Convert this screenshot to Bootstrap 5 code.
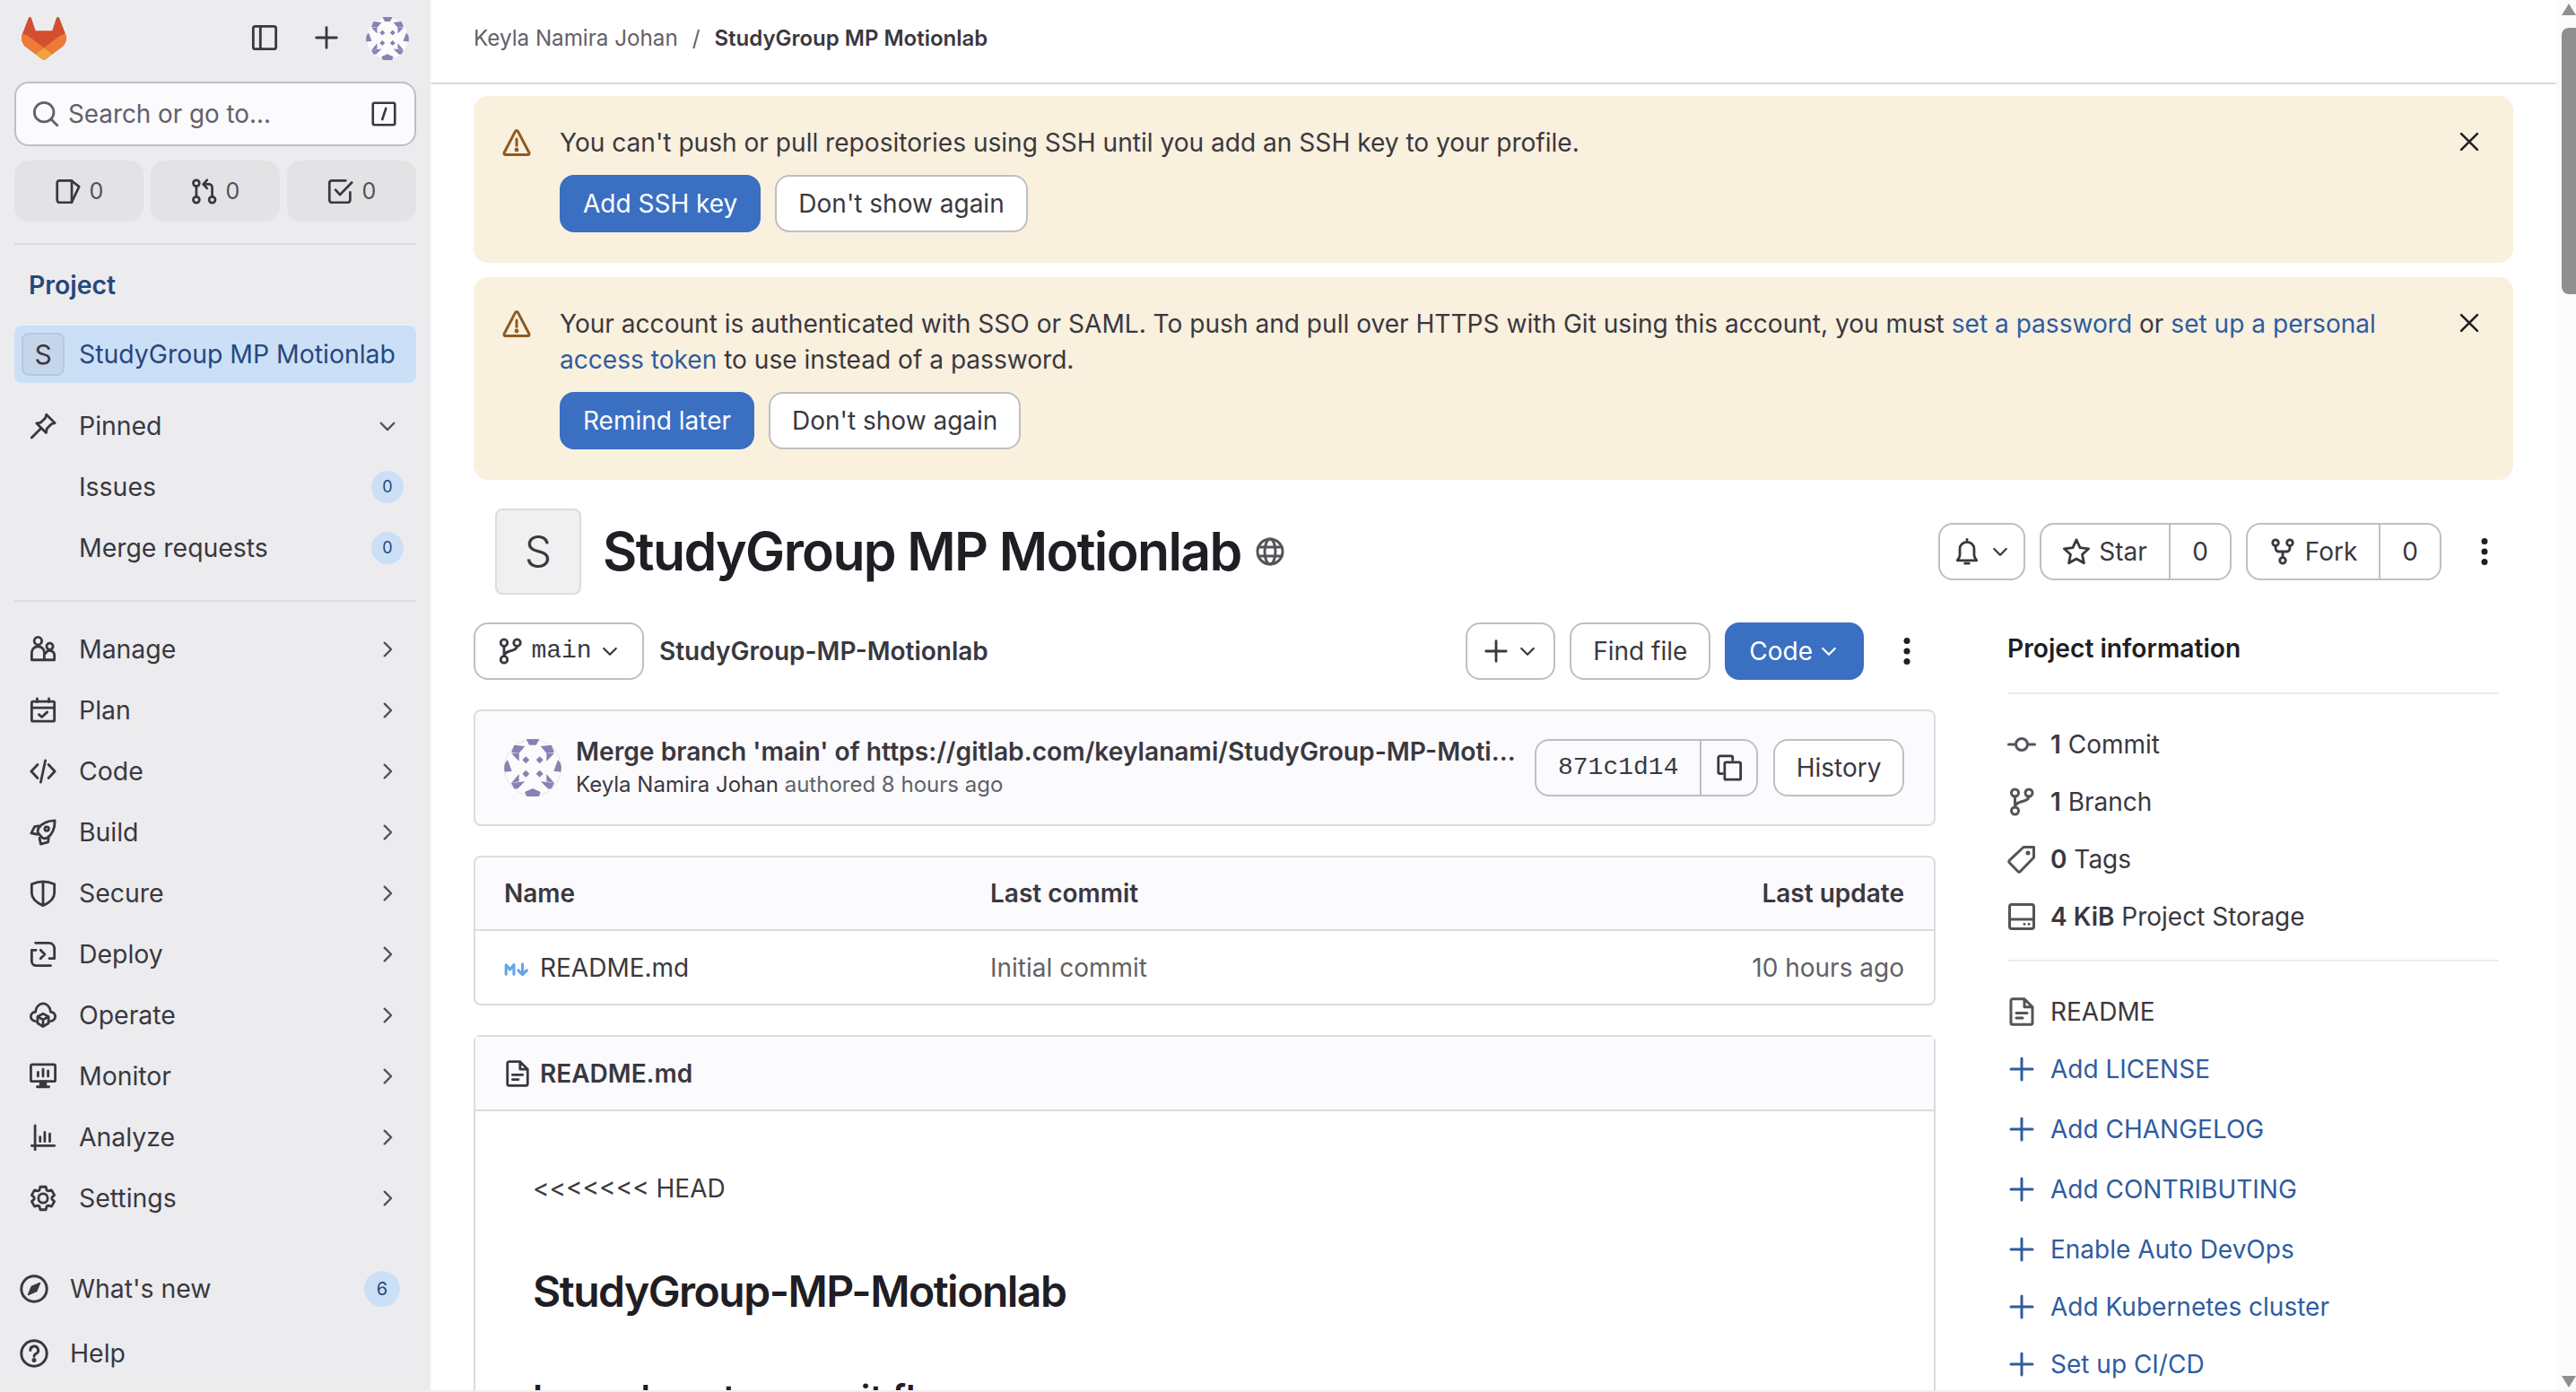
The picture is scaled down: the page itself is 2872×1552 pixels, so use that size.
<!DOCTYPE html>
<html lang="en">
<head>
<meta charset="utf-8">
<title>StudyGroup MP Motionlab</title>
<link rel="stylesheet" href="https://cdn.jsdelivr.net/npm/bootstrap@5.3.0/dist/css/bootstrap.min.css">
<style>
html,body{height:100%;overflow:hidden}
body{font-family:Inter,"Noto Sans",sans-serif;font-size:28px;line-height:40px;color:#3a383f;background:#fff}
a{text-decoration:none}
svg.ic{width:30px;height:30px;flex:none;fill:none;stroke:currentColor;stroke-width:1.5;stroke-linecap:round;stroke-linejoin:round}
.app-shell{height:100vh;border-bottom:2px solid #eee}
.side{width:480px;flex:none;background:#ececef;padding:0 16px;font-size:28.4px}
.side-top{height:86px;padding:19px 8px 0}
.logo{width:50px;height:48px}
.top-ava{width:48px;height:48px}
.side-search{height:72px;margin-top:5px;background:#fbfafd;border:2px solid #bfbfc3;border-radius:16px;padding:0 18px;color:#626168;font-size:27.8px}
.counter-row{margin-top:16px;gap:8px}
.counter{width:144px;height:68px;background:#e3e3e5;border-radius:16px;gap:10px;font-size:25px;color:#535158}
.counter svg.ic{width:29px;height:29px;color:#3a383f}
.side-rule{height:2px;background:#dcdcde;margin:24px 0 0}
.side-title{height:64px;margin-top:13px;padding-left:16px;font-weight:600;color:#28477c}
.side-active{height:64px;margin-top:13px;background:#cbe0f7;border-radius:8px;padding-left:8px;gap:16px;color:#28477c}
.side-ava{width:48px;height:48px;background:#c6d6ea;border:2px solid #b8c8dc;border-radius:8px;color:#3a383f;font-size:30px}
.nav-row{height:68px;padding:0 17px;gap:25px;color:#3a383f}
.nav-row .lbl{flex-grow:1}
.nav-row svg.chev{color:#55535a;width:26px;height:26px;margin-right:2px}
.nav-sub{padding-left:72px}
.count-pill{width:40px;height:40px;border-radius:50%;background:#cbe0f7;color:#28477c;font-size:20px;flex:none}
.count-sm{width:36px;height:36px;margin-right:-3px;font-size:18px}
.foot-row{height:68px;padding:0 18px 0 6px;gap:24px}
.foot-row svg.ic{width:32px;height:32px}
.mt-manage{margin-top:19px}.mt-foot{margin-top:33px}.mt-help{margin-top:4px}
.main-col{min-width:0}
.topbar{height:94px;border-bottom:2px solid #dcdcde;padding:0 48px 6px;font-size:24.2px;color:#626168}
.topbar b{font-weight:600;color:#3a383f;font-size:24px}
.page{padding:13px 48px 0}
.warn{background:#f9f0de;border:0;border-radius:16px;padding:32px 37px 34px 32px;margin:0 0 16px;gap:32px;color:#3a383f;font-size:28.08px}
.warn .tri{width:32px;height:32px;color:#8f5a21;margin-top:4px}
.warn-x{width:26px!important;height:26px!important;color:#1f1e24;margin-top:6px;margin-left:4px;stroke-width:1.6!important}
.warn-body{width:2080px;flex:none}
.warn a{color:#2f5ca0}
.warn-actions{gap:16px;margin-top:16px}
.gl-btn{height:64px;padding:0 26px;border:2px solid #bfbfc3;border-radius:16px;background:#fff;color:#3a383f;font-size:28px;line-height:40px;display:inline-flex;align-items:center;justify-content:center}
.gl-btn:hover{background:#fff;color:#3a383f}
.warn-actions .gl-btn{padding:0 24px}
.gl-pri{background:#3a6fc2;border-color:#3a6fc2;color:#fff}
.gl-pri:hover{background:#3a6fc2;color:#fff}
.proj-head{margin-top:32px;padding:0 16px 0 24px;height:96px}
.proj-ava{width:96px;height:96px;background:#f0f0f0;border:2px solid #dcdcde;border-radius:8px;font-size:48px;color:#3a383f;margin-right:24px;font-weight:300}
.proj-name{font-size:59px;line-height:64px;font-weight:600;color:#1f1e24;margin:0;letter-spacing:-1.65px}
.proj-globe{width:32px!important;height:32px!important;margin-left:16px;color:#55535a}
.head-tools{gap:16px;margin-left:auto}
.gl-split{height:64px;border:2px solid #bfbfc3;border-radius:16px;overflow:hidden}
.gl-split>span{display:flex;align-items:center;justify-content:center;height:100%}
.gl-split>span+span{border-left:2px solid #bfbfc3}
.kebab{width:32px;height:32px;fill:currentColor;color:#1f1e24;flex:none}
.body-cols{margin-top:31px;gap:80px}
.left-col{width:1630px;flex:none}
.right-col{width:548px;flex:none;margin-top:-3px}
.repo-bar{height:64px}
.repo-name{font-weight:600;margin-left:17px}
.mono{font-family:"Liberation Mono","DejaVu Sans Mono",monospace}
.repo-tools{gap:16px;margin-left:auto}
.find-btn{padding:0 24px}
.commit-box{margin-top:33px;height:130px;background:#fbfafd;border:2px solid #dcdcde;border-radius:8px;padding:0 33px 0 32px;flex-direction:row}
.commit-ava{width:64px;height:64px;flex:none;margin-right:16px}
.commit-title{font-weight:600;font-size:28.2px;line-height:38px;white-space:nowrap}
.commit-sub{font-size:24px;line-height:36px;color:#626168}
.commit-sub b{font-weight:400;color:#3a383f}
.sha-group{height:64px;margin-left:auto;margin-right:17px;background:transparent;flex:none}
.hist-btn{padding:0 23.5px;flex:none}
.file-box{margin-top:33px;border:2px solid #dcdcde;border-radius:8px;overflow:hidden}
.file-tbl{margin:0;width:100%;table-layout:fixed;color:#3a383f}
.file-tbl th,.file-tbl td{border:0;padding:0;vertical-align:middle;background:transparent;color:inherit;box-shadow:none}
.file-tbl thead tr{height:81px;background:#fbfafd;border-bottom:2px solid #dcdcde}
.file-tbl tbody tr{height:82px}
.file-tbl th{font-weight:600}
.file-tbl .c1{width:574px;padding-left:32px}
.file-tbl .c3{text-align:right;padding-right:33px}
.file-tbl .muted{color:#626168}
.md-ico{width:28px!important;height:28px!important;margin-right:12px;vertical-align:-6px;color:#63a6e9;stroke-width:1.6!important}
.readme-box{margin-top:33px;border:2px solid #dcdcde;border-radius:8px 8px 0 0;background:#fff;height:600px}
.readme-head{height:83px;background:#fbfafd;border-bottom:2px solid #dcdcde;padding:0 32px;gap:10px;font-weight:600}
.readme-body{padding:66px 64px 0 64px}
.readme-body p{margin:0 0 67px}
.readme-body h1{font-size:48px;line-height:56px;font-weight:600;margin:0 0 66px;color:#1f1e24;letter-spacing:-1.5px}
.readme-body h2{font-size:40px;line-height:50px;font-weight:600;margin:0;color:#1f1e24}
.info-title{height:64px;font-weight:600;color:#1f1e24;font-size:28.2px}
.info-rule{height:2px;background:#ececef;margin:17px 0 24px}
.info-rule2{margin:16px 0 24px}
.info-row{height:64px;gap:16px;font-size:28px;color:#3a383f}
.info-row svg.ic{width:32px;height:32px;color:#55535a}
.info-row b{font-weight:600}
.info-link{color:#2f5ca0}
.info-row.info-link svg.ic{color:#2f5ca0}
.mt-3px{margin-top:3px}
.fake-scroll{width:22px;flex:none;background:#fbfbfb;padding-left:6px}
.arrow-up{width:0;height:0;border-left:8px solid transparent;border-right:8px solid transparent;border-bottom:13px solid #8f8f8f;margin-top:4px}
.thumb{width:16px;height:297px;background:#8f8f8f;border-radius:8px 0 0 8px;margin-top:14px}
.arrow-down{width:0;height:0;border-left:8px solid transparent;border-right:8px solid transparent;border-top:13px solid #8f8f8f;margin-top:auto;margin-bottom:3px}
.chev-sm{width:24px!important;height:24px!important}
</style>
</head>
<body>
<svg width="0" height="0" class="position-absolute" aria-hidden="true">
<defs>
<symbol id="i-panel" viewBox="0 0 16 16"><rect x="1.25" y="1.25" width="13.5" height="13.5" rx="1.2"/><path d="M5.5 1.25v13.5"/></symbol>
<symbol id="i-plus" viewBox="0 0 16 16"><path d="M8 2v12M2 8h12"/></symbol>
<symbol id="i-search" viewBox="0 0 16 16"><circle cx="7" cy="7" r="5.75"/><path d="M11.2 11.2l3.6 3.6"/></symbol>
<symbol id="i-slash" viewBox="0 0 16 16"><rect x="1" y="1" width="14" height="14" rx="1"/><path d="M9.3 4.5L7 11.5"/></symbol>
<symbol id="i-issues" viewBox="0 0 16 16"><path d="M3 1.25h7.5v13.5H3A1.5 1.5 0 0 1 1.5 13.25v-10.5A1.5 1.5 0 0 1 3 1.25z"/><path d="M10.5 1.5L15 5l-4.5 9.5"/></symbol>
<symbol id="i-mr" viewBox="0 0 16 16"><circle cx="3.25" cy="2.9" r="1.9"/><circle cx="3.25" cy="13.1" r="1.9"/><circle cx="13" cy="13.1" r="1.9"/><path d="M3.25 4.8v6.4M13 11.2V5.5a2 2 0 0 0-2-2H8M9.8 1L7.5 3.5 9.8 6"/></symbol>
<symbol id="i-todo" viewBox="0 0 16 16"><path d="M14 8.5v4.75a1.5 1.5 0 0 1-1.5 1.5H2.75a1.5 1.5 0 0 1-1.5-1.5V2.75a1.5 1.5 0 0 1 1.5-1.5h8.5"/><path d="M5 7l2.75 3L15 2.5"/></symbol>
<symbol id="i-pin" viewBox="0 0 16 16"><path d="M10 1.2L15 6.2 13 6.8 10.3 9.5 9.8 12 4.2 6.4 6.7 5.9 9.4 3.2z"/><path d="M6.8 9.3L1.2 14.9"/></symbol>
<symbol id="i-users" viewBox="0 0 16 16"><circle cx="5" cy="3" r="2.25"/><circle cx="12" cy="6.25" r="1.9"/><path d="M1.25 14.25V10a3.75 3.75 0 0 1 7.5 0v4.25zM8.75 14.25h6V11.5a2.75 2.75 0 0 0-5.2-1.2"/></symbol>
<symbol id="i-plan" viewBox="0 0 16 16"><rect x="1.25" y="2.75" width="13.5" height="11.75" rx=".8"/><path d="M1.25 6.5h13.5M4.5 1v2M11.5 1v2M5.5 10.5l1.75 1.5 3.25-3"/></symbol>
<symbol id="i-code" viewBox="0 0 16 16"><path d="M4.75 4L1 8l3.75 4M11.25 4L15 8l-3.75 4M9.4 1.5L6.6 14.5"/></symbol>
<symbol id="i-rocket" viewBox="0 0 16 16"><path d="M15 1c-4.2.1-7.6 1.4-9.7 4.6-.7 1.2-.6 2.2.1 3.2L7.3 11c1 .8 2.2.9 3.3.1C13.7 9 15 5.3 15 1z"/><circle cx="10.2" cy="5.9" r="1.2"/><path d="M5.5 4.2L3 4.6 1 8.5l3.6.7M11.4 10.6l-.4 3.2-4.4 1.2-.7-3.6"/></symbol>
<symbol id="i-shield" viewBox="0 0 16 16"><path d="M8 1C5.6 1 3.4 1.6 1.25 2.5v5.25c0 3 2.4 5.6 6.75 7.5 4.35-1.9 6.75-4.5 6.75-7.5V2.5C12.6 1.6 10.4 1 8 1zM8 1v14"/></symbol>
<symbol id="i-deploy" viewBox="0 0 16 16"><path d="M3.5 1.25h8A3.25 3.25 0 0 1 14.75 4.5v6h-3M1.25 5.5V12a2.75 2.75 0 0 0 2.75 2.75h8.5M1.25 5.5h2.5M6.5 5.5L9 8l-2.5 2.5"/></symbol>
<symbol id="i-operate" viewBox="0 0 16 16"><path d="M3.5 11.5C1.8 11.4.75 10 .75 8.7.75 7.3 2 6.1 3.5 6 3.6 3.2 5.7 1 8 1s4.4 2.2 4.5 5c1.5.1 2.75 1.3 2.75 2.7 0 1.3-1.05 2.7-2.75 2.8"/><path d="M8 7l3.25 1.75v3.9L8 14.75l-3.25-2.1v-3.9zM4.75 8.75L8 10.6l3.25-1.85M8 10.6v4.1"/></symbol>
<symbol id="i-monitor" viewBox="0 0 16 16"><rect x=".75" y="1" width="14.5" height="10" rx=".8"/><path d="M4.5 14.25h7M6.5 11v3M8 11v3M9.5 11v3M5 5.5v2.5M8 3.75V8M11 4.75V8"/></symbol>
<symbol id="i-analyze" viewBox="0 0 16 16"><path d="M3.25 1v14.5M1.25 13h13.5M6.25 7.75v2.75M9 5v5.5M12 6v4.5"/></symbol>
<symbol id="i-gear" viewBox="0 0 16 16"><path d="M5.84 3.16L6.31 1.21H9.69L10.16 3.16 11.12 3.71 13.04 3.14 14.73 6.07 13.27 7.45V8.55L14.73 9.93 13.04 12.86 11.12 12.29 10.16 12.84 9.69 14.79H6.31L5.84 12.84 4.88 12.29 2.96 12.86 1.27 9.93 2.73 8.55V7.45L1.27 6.07 2.96 3.14 4.88 3.71z"/><circle cx="8" cy="8" r="2.75"/></symbol>
<symbol id="i-compass" viewBox="0 0 16 16"><circle cx="8" cy="8" r="7.1"/><path d="M11.2 4.8L9.3 9.3 4.8 11.2 6.7 6.7z" fill="currentColor" stroke-width=".8"/></symbol>
<symbol id="i-help" viewBox="0 0 16 16"><circle cx="8" cy="8" r="7.1"/><path d="M5.9 6.2A2.2 2.2 0 1 1 9 8.2c-.6.3-1 .7-1 1.4"/><circle cx="8" cy="11.8" r=".5" fill="currentColor"/></symbol>
<symbol id="i-warn" viewBox="0 0 16 16"><path d="M8 1.2c.3 0 .5.2.7.5l6.2 11.8c.3.6 0 1.2-.7 1.2H1.8c-.7 0-1-.6-.7-1.2L7.3 1.7c.2-.3.4-.5.7-.5z"/><path d="M8 6v3.6"/><circle cx="8" cy="12" r=".45" fill="currentColor"/></symbol>
<symbol id="i-x" viewBox="0 0 16 16"><path d="M2.5 2.5l11 11M13.5 2.5l-11 11"/></symbol>
<symbol id="i-down" viewBox="0 0 16 16"><path d="M3.5 6l4.5 4.5L12.500 6"/></symbol>
<symbol id="i-right" viewBox="0 0 16 16"><path d="M6 3.5L10.500 8 6 12.500"/></symbol>
<symbol id="i-bell" viewBox="0 0 16 16"><path d="M8 .75v1.5M2.250 13.250c.9-.9 1.500-1.900 1.500-3.250V6.500a4.250 4.250 0 0 1 8.500 0V10c0 1.350.6 2.350 1.500 3.250zM6.750 15h2.500"/></symbol>
<symbol id="i-star" viewBox="0 0 16 16"><path d="M8 1l2.150 4.700 5.100.6-3.780 3.480 1 5.040L8 12.300l-4.470 2.520 1-5.040L.75 6.300l5.100-.6z"/></symbol>
<symbol id="i-fork" viewBox="0 0 16 16"><circle cx="3.750" cy="2.750" r="1.750"/><circle cx="12.250" cy="2.750" r="1.750"/><circle cx="8" cy="13.250" r="1.750"/><path d="M3.750 4.500V6a2 2 0 0 0 2 2h4.500a2 2 0 0 0 2-2V4.500M8 8v3.500"/></symbol>
<symbol id="i-branch" viewBox="0 0 16 16"><circle cx="4.250" cy="13" r="2"/><circle cx="4.250" cy="3" r="2"/><circle cx="12" cy="3" r="2"/><path d="M4.250 5v6M12 5c0 3.500-7.750 2-7.750 6"/></symbol>
<symbol id="i-commit" viewBox="0 0 16 16"><circle cx="8" cy="8" r="3.250"/><path d="M.75 8h4M11.250 8h4"/></symbol>
<symbol id="i-tag" viewBox="0 0 16 16"><path d="M9 1.250h5.750V7l-7.500 7.750a1 1 0 0 1-1.400 0L1.250 10a1 1 0 0 1 0-1.400z"/><circle cx="11.500" cy="4.500" r=".5" fill="currentColor"/></symbol>
<symbol id="i-storage" viewBox="0 0 16 16"><rect x="1.250" y="1.250" width="13.500" height="13.500" rx="1.200"/><path d="M1.250 9.500h13.500M9.500 12.100h.01M12 12.100h.01"/></symbol>
<symbol id="i-doc" viewBox="0 0 16 16"><path d="M9.500 .9H3a1 1 0 0 0-1 1v12.200a1 1 0 0 0 1 1h10a1 1 0 0 0 1-1V5.400zM9.500 .9v4.500H14M5 8.750h6M5 11.500h3.500"/></symbol>
<symbol id="i-copy" viewBox="0 0 16 16"><path d="M4 11.500H2.500a1 1 0 0 1-1-1V2a1 1 0 0 1 1-1H9a1 1 0 0 1 1 1v1.500"/><rect x="5.250" y="4.750" width="9.500" height="10.250" rx=".8"/></symbol>
<symbol id="i-globe" viewBox="0 0 16 16"><circle cx="8" cy="8" r="7"/><ellipse cx="8" cy="8" rx="3" ry="7"/><path d="M1.500 5.500h13M1.500 10.500h13"/></symbol>
<symbol id="i-kebab" viewBox="0 0 16 16"><circle cx="8" cy="2.250" r="1.750"/><circle cx="8" cy="8" r="1.750"/><circle cx="8" cy="13.750" r="1.750"/></symbol>
<symbol id="i-md" viewBox="0 0 16 16"><path d="M1.250 11V5l2.500 3 2.500-3v6M11.750 4.500V11M9 8.500l2.750 2.750L14.500 8.500" stroke-width="1.800"/></symbol>
<symbol id="i-logo" viewBox="0 0 25 24"><path fill="#d2502f" d="m24.507 9.5-.034-.09L21.082.562a.896.896 0 0 0-1.694.091l-2.29 7.01H7.825L5.535.653a.898.898 0 0 0-1.694-.09L.451 9.411.416 9.5a6.297 6.297 0 0 0 2.09 7.278l.012.01.03.022 5.16 3.867 2.56 1.935 1.554 1.176a1.051 1.051 0 0 0 1.268 0l1.555-1.176 2.56-1.935 5.197-3.89.014-.01A6.297 6.297 0 0 0 24.507 9.5Z"/><path fill="#ef7a38" d="m24.507 9.5-.034-.09a11.44 11.44 0 0 0-4.56 2.051l-7.447 5.632 4.742 3.584 5.197-3.89.014-.01A6.297 6.297 0 0 0 24.507 9.5Z"/><path fill="#f0a43f" d="m7.707 20.677 2.56 1.935 1.555 1.176a1.051 1.051 0 0 0 1.268 0l1.555-1.176 2.56-1.935-4.743-3.584-4.755 3.584Z"/><path fill="#ef7a38" d="M5.01 11.461a11.43 11.43 0 0 0-4.56-2.05L.416 9.5a6.297 6.297 0 0 0 2.09 7.278l.012.01.03.022 5.16 3.867 4.745-3.584-7.444-5.632Z"/></symbol>
<symbol id="i-ava" viewBox="0 0 64 64"><circle cx="32" cy="32" r="31.500" fill="#fbfbfd" stroke="#e6e6ea" stroke-width="1"/><g fill="#8583b4"><path d="M24.700 .3C29 -.2 35 -.2 39.300 .3L35.700 6.700H28z"/><path d="M23 59l9-4 8.700 4-1.700 4.700c-4 .6-10 .6-14 0z"/><path d="M4 23.300l4.700 12.400-8 1C-.3 32-.2 27 4 23.300z"/><path d="M60 23.300l-4.700 12.400 8 1c1-4.700.9-9.700-3.300-13.400z"/><path d="M11.300 6.700l12 1.300-6.600 7.700-8.700-1z"/><path d="M52.700 6.700l-12 1.300 6.600 7.700 8.700-1z"/><path d="M8 15.700h8.700v9z"/><path d="M56 15.700h-8.700v9z"/><path d="M8 49l8.700-10v8.300z"/><path d="M56 49l-8.700-10v8.300z"/><path d="M8 49l15.300-1.700-8.600 8.400-3.700-.7z"/><path d="M56 49l-15.300-1.700 8.600 8.400 3.700-.7z"/><path d="M24.300 19.300l4 4-4 4-4-4z"/><path d="M39.700 19.300l4 4-4 4-4-4z"/><path d="M24.300 34.700l4 4-4 4-4-4z"/><path d="M39.700 34.700l4 4-4 4-4-4z"/></g></symbol>
</defs>
</svg>

<div class="app-shell d-flex">
  <aside class="side d-flex flex-column">
    <div class="side-top d-flex align-items-start">
      <svg class="logo"><use href="#i-logo"/></svg>
      <svg class="ic ms-auto mt-2" style="margin-right:39px"><use href="#i-panel"/></svg>
      <svg class="ic mt-2" style="margin-right:29px"><use href="#i-plus"/></svg>
      <svg class="top-ava"><use href="#i-ava"/></svg>
    </div>
    <div class="side-search d-flex align-items-center gap-2">
      <svg class="ic" style="margin-right:2px"><use href="#i-search"/></svg>
      <span class="flex-grow-1">Search or go to...</span>
      <svg class="ic" style="width:28px;height:28px;color:#3a383f;margin-right:2px"><use href="#i-slash"/></svg>
    </div>
    <div class="counter-row d-flex">
      <div class="counter d-flex align-items-center justify-content-center"><svg class="ic"><use href="#i-issues"/></svg>0</div>
      <div class="counter d-flex align-items-center justify-content-center"><svg class="ic"><use href="#i-mr"/></svg>0</div>
      <div class="counter d-flex align-items-center justify-content-center"><svg class="ic"><use href="#i-todo"/></svg>0</div>
    </div>
    <div class="side-rule"></div>
    <div class="side-title d-flex align-items-center">Project</div>
    <div class="side-active d-flex align-items-center"><span class="side-ava d-flex align-items-center justify-content-center">S</span>StudyGroup MP Motionlab</div>
    <div class="nav-row d-flex align-items-center" style="margin-top:14px"><svg class="ic"><use href="#i-pin"/></svg><span class="lbl">Pinned</span><svg class="ic chev"><use href="#i-down"/></svg></div>
    <div class="nav-row nav-sub d-flex align-items-center"><span class="lbl">Issues</span><span class="count-pill count-sm d-flex align-items-center justify-content-center">0</span></div>
    <div class="nav-row nav-sub d-flex align-items-center"><span class="lbl">Merge requests</span><span class="count-pill count-sm d-flex align-items-center justify-content-center">0</span></div>
    <div class="side-rule"></div>
    <div class="nav-row mt-manage d-flex align-items-center"><svg class="ic"><use href="#i-users"/></svg><span class="lbl">Manage</span><svg class="ic chev"><use href="#i-right"/></svg></div>
    <div class="nav-row d-flex align-items-center"><svg class="ic"><use href="#i-plan"/></svg><span class="lbl">Plan</span><svg class="ic chev"><use href="#i-right"/></svg></div>
    <div class="nav-row d-flex align-items-center"><svg class="ic"><use href="#i-code"/></svg><span class="lbl">Code</span><svg class="ic chev"><use href="#i-right"/></svg></div>
    <div class="nav-row d-flex align-items-center"><svg class="ic"><use href="#i-rocket"/></svg><span class="lbl">Build</span><svg class="ic chev"><use href="#i-right"/></svg></div>
    <div class="nav-row d-flex align-items-center"><svg class="ic"><use href="#i-shield"/></svg><span class="lbl">Secure</span><svg class="ic chev"><use href="#i-right"/></svg></div>
    <div class="nav-row d-flex align-items-center"><svg class="ic"><use href="#i-deploy"/></svg><span class="lbl">Deploy</span><svg class="ic chev"><use href="#i-right"/></svg></div>
    <div class="nav-row d-flex align-items-center"><svg class="ic"><use href="#i-operate"/></svg><span class="lbl">Operate</span><svg class="ic chev"><use href="#i-right"/></svg></div>
    <div class="nav-row d-flex align-items-center"><svg class="ic"><use href="#i-monitor"/></svg><span class="lbl">Monitor</span><svg class="ic chev"><use href="#i-right"/></svg></div>
    <div class="nav-row d-flex align-items-center"><svg class="ic"><use href="#i-analyze"/></svg><span class="lbl">Analyze</span><svg class="ic chev"><use href="#i-right"/></svg></div>
    <div class="nav-row d-flex align-items-center"><svg class="ic"><use href="#i-gear"/></svg><span class="lbl">Settings</span><svg class="ic chev"><use href="#i-right"/></svg></div>
    <div class="foot-row mt-foot d-flex align-items-center"><svg class="ic"><use href="#i-compass"/></svg><span class="flex-grow-1">What's new</span><span class="count-pill d-flex align-items-center justify-content-center">6</span></div>
    <div class="foot-row mt-help d-flex align-items-center"><svg class="ic"><use href="#i-help"/></svg><span>Help</span></div>
  </aside>

  <div class="main-col flex-grow-1 overflow-hidden">
    <div class="topbar d-flex align-items-center"><span>Keyla Namira Johan</span><span class="mx-3">/</span><b>StudyGroup MP Motionlab</b></div>
    <div class="page">
      <div class="alert warn d-flex" role="alert">
        <svg class="ic tri"><use href="#i-warn"/></svg>
        <div class="warn-body">
          <div>You can't push or pull repositories using SSH until you add an SSH key to your profile.</div>
          <div class="warn-actions d-flex"><button class="btn gl-btn gl-pri">Add SSH key</button><button class="btn gl-btn">Don't show again</button></div>
        </div>
        <svg class="ic warn-x"><use href="#i-x"/></svg>
      </div>
      <div class="alert warn d-flex" role="alert">
        <svg class="ic tri"><use href="#i-warn"/></svg>
        <div class="warn-body">
          <div>Your account is authenticated with SSO or SAML. To push and pull over HTTPS with Git using this account, you must <a href="#">set a password</a> or <a href="#">set up a personal</a> <a href="#">access token</a> to use instead of a password.</div>
          <div class="warn-actions d-flex"><button class="btn gl-btn gl-pri">Remind later</button><button class="btn gl-btn">Don't show again</button></div>
        </div>
        <svg class="ic warn-x"><use href="#i-x"/></svg>
      </div>

      <div class="proj-head d-flex align-items-center">
        <div class="proj-ava d-flex align-items-center justify-content-center">S</div>
        <h1 class="proj-name">StudyGroup MP Motionlab</h1>
        <svg class="ic proj-globe"><use href="#i-globe"/></svg>
        <div class="head-tools d-flex align-items-center">
          <button class="btn gl-btn" style="padding:0;gap:10px;width:97px"><svg class="ic"><use href="#i-bell"/></svg><svg class="ic chev-sm"><use href="#i-down"/></svg></button>
          <div class="gl-split d-flex"><span style="width:142px;gap:10px"><svg class="ic"><use href="#i-star"/></svg>Star</span><span style="width:68px">0</span></div>
          <div class="gl-split d-flex"><span style="width:146px;gap:10px"><svg class="ic"><use href="#i-fork"/></svg>Fork</span><span style="width:68px">0</span></div>
          <svg class="kebab ms-3"><use href="#i-kebab"/></svg>
        </div>
      </div>

      <div class="body-cols d-flex">
        <div class="left-col">
          <div class="repo-bar d-flex align-items-center">
            <button class="btn gl-btn" style="width:190px;padding:0;gap:8px"><svg class="ic"><use href="#i-branch"/></svg><span class="mono">main</span><svg class="ic chev-sm"><use href="#i-down"/></svg></button>
            <span class="repo-name">StudyGroup-MP-Motionlab</span>
            <div class="repo-tools d-flex align-items-center">
              <button class="btn gl-btn" style="width:100px;padding:0;gap:8px"><svg class="ic"><use href="#i-plus"/></svg><svg class="ic chev-sm"><use href="#i-down"/></svg></button>
              <button class="btn gl-btn find-btn">Find file</button>
              <button class="btn gl-btn gl-pri" style="gap:6px;padding:0 25px">Code<svg class="ic chev-sm"><use href="#i-down"/></svg></button>
              <svg class="kebab ms-3"><use href="#i-kebab"/></svg>
              <span></span>
            </div>
          </div>
          <div class="commit-box d-flex align-items-center">
            <svg class="commit-ava"><use href="#i-ava"/></svg>
            <div style="min-width:0">
              <div class="commit-title">Merge branch 'main' of https://gitlab.com/keylanami/StudyGroup-MP-Moti...</div>
              <div class="commit-sub"><b>Keyla Namira Johan</b> authored 8 hours ago</div>
            </div>
            <div class="sha-group gl-split d-flex"><span class="mono" style="width:182px">871c1d14</span><span style="width:63px"><svg class="ic"><use href="#i-copy"/></svg></span></div>
            <button class="btn gl-btn hist-btn">History</button>
          </div>
          <div class="file-box">
            <table class="table file-tbl">
              <thead><tr><th class="c1">Name</th><th>Last commit</th><th class="c3">Last update</th></tr></thead>
              <tbody><tr><td class="c1"><svg class="ic md-ico"><use href="#i-md"/></svg>README.md</td><td class="muted">Initial commit</td><td class="c3 muted">10 hours ago</td></tr></tbody>
            </table>
          </div>
          <div class="readme-box">
            <div class="readme-head d-flex align-items-center"><svg class="ic"><use href="#i-doc"/></svg>README.md</div>
            <div class="readme-body">
              <p>&lt;&lt;&lt;&lt;&lt;&lt;&lt; HEAD</p>
              <h1>StudyGroup-MP-Motionlab</h1>
              <h2>Learn how to use git flow</h2>
            </div>
          </div>
        </div>
        <div class="right-col">
          <div class="info-title d-flex align-items-center">Project information</div>
          <div class="info-rule"></div>
          <div class="info-row d-flex align-items-center"><svg class="ic"><use href="#i-commit"/></svg><span><b>1</b> Commit</span></div>
          <div class="info-row d-flex align-items-center"><svg class="ic"><use href="#i-branch"/></svg><span><b>1</b> Branch</span></div>
          <div class="info-row d-flex align-items-center"><svg class="ic"><use href="#i-tag"/></svg><span><b>0</b> Tags</span></div>
          <div class="info-row d-flex align-items-center"><svg class="ic"><use href="#i-storage"/></svg><span><b>4 KiB</b> Project Storage</span></div>
          <div class="info-rule info-rule2"></div>
          <div class="info-row d-flex align-items-center"><svg class="ic"><use href="#i-doc"/></svg><span>README</span></div>
          <div class="info-row info-link d-flex align-items-center"><svg class="ic"><use href="#i-plus"/></svg><span>Add LICENSE</span></div>
          <div class="info-row info-link mt-3px d-flex align-items-center"><svg class="ic"><use href="#i-plus"/></svg><span>Add CHANGELOG</span></div>
          <div class="info-row info-link mt-3px d-flex align-items-center"><svg class="ic"><use href="#i-plus"/></svg><span>Add CONTRIBUTING</span></div>
          <div class="info-row info-link mt-3px d-flex align-items-center"><svg class="ic"><use href="#i-plus"/></svg><span>Enable Auto DevOps</span></div>
          <div class="info-row info-link d-flex align-items-center"><svg class="ic"><use href="#i-plus"/></svg><span>Add Kubernetes cluster</span></div>
          <div class="info-row info-link d-flex align-items-center"><svg class="ic"><use href="#i-plus"/></svg><span>Set up CI/CD</span></div>
        </div>
      </div>
    </div>
  </div>

  <div class="fake-scroll d-flex flex-column">
    <div class="arrow-up"></div>
    <div class="thumb"></div>
    <div class="arrow-down"></div>
  </div>
</div>
<script src="https://cdn.jsdelivr.net/npm/bootstrap@5.3.0/dist/js/bootstrap.bundle.min.js"></script>
</body>
</html>
